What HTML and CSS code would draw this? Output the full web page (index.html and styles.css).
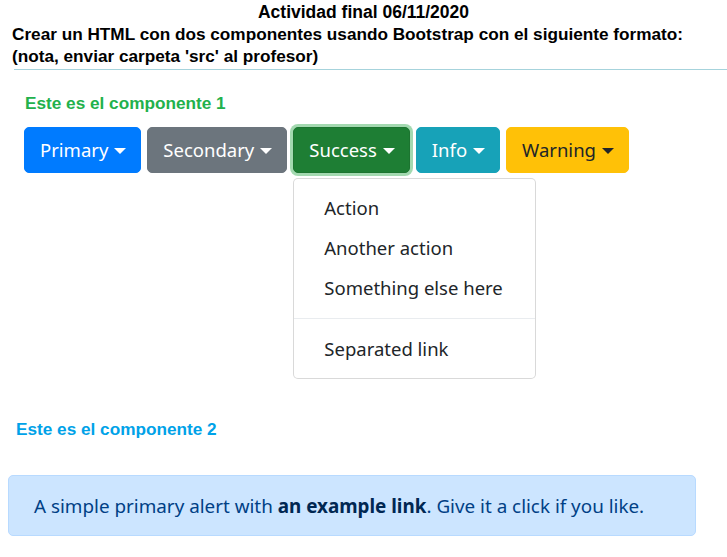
FILE: index.html
```html
<!DOCTYPE html>
<html lang="es">
<head>
<meta charset="utf-8">
<title>Actividad final</title>
<link rel="stylesheet" href="styles.css">
</head>
<body>
<header class="intro">
  <h1 class="title">Actividad final 06/11/2020</h1>
  <p class="task">Crear un HTML con dos componentes usando Bootstrap con el siguiente formato:<br>(nota, enviar carpeta 'src' al profesor)</p>
</header>
<hr class="rule">
<section class="comp comp1">
  <h2 class="label label-green">Este es el componente 1</h2>
  <div class="btn-row">
    <div class="dd"><button class="btn btn-primary">Primary<span class="caret"></span></button></div>
    <div class="dd"><button class="btn btn-secondary">Secondary<span class="caret"></span></button></div>
    <div class="dd open">
      <button class="btn btn-success focus">Success<span class="caret"></span></button>
      <div class="menu">
        <a class="item">Action</a>
        <a class="item">Another action</a>
        <a class="item">Something else here</a>
        <div class="divider"></div>
        <a class="item">Separated link</a>
      </div>
    </div>
    <div class="dd"><button class="btn btn-info">Info<span class="caret"></span></button></div>
    <div class="dd"><button class="btn btn-warning">Warning<span class="caret"></span></button></div>
  </div>
</section>
<section class="comp comp2">
  <h2 class="label label-blue">Este es el componente 2</h2>
  <div class="alert"><p class="alert-text">A simple primary alert with <b>an example link</b>. Give it a click if you like.</p></div>
</section>
</body>
</html>
```
FILE: styles.css
```css
* { box-sizing: border-box; }
body {
  margin: 0;
  background: #fff;
  font-family: "Liberation Sans", Arial, sans-serif;
  color: #000;
}
.intro { padding-top: 1px; }
.title {
  margin: 0;
  text-align: center;
  font-size: 17.5px;
  line-height: 22px;
  font-weight: bold;
}
.task {
  margin: 0;
  padding-left: 12px;
  font-size: 17.2px;
  line-height: 22px;
  font-weight: bold;
}
.rule {
  margin: 2px 0 0 14px;
  border: 0;
  border-top: 1px solid #a6d3dc;
  height: 0;
}
.comp1 { padding: 22px 0 0 24px; }
.label {
  margin: 0;
  font-size: 17.2px;
  line-height: 22px;
  font-weight: bold;
}
.label-green { color: #22b14c; padding-left: 1px; }
.label-blue { color: #00a2e8; }
.btn-row {
  display: flex;
  gap: 6px;
  margin-top: 13px;
}
.dd { position: relative; }
.btn {
  font-family: "Noto Sans", "Open Sans", sans-serif;
  font-size: 18.5px;
  line-height: 28px;
  height: 46px;
  padding: 0 14px 0 15px;
  border: 1px solid transparent;
  border-radius: 5px;
  color: #fff;
  display: flex;
  align-items: center;
  cursor: pointer;
}
.caret {
  display: inline-block;
  width: 0; height: 0;
  margin-left: 6px;
  margin-top: 1px;
  border-top: 6px solid currentColor;
  border-left: 6px solid transparent;
  border-right: 6px solid transparent;
}
.btn-primary { background: #007bff; border-color: #007bff; }
.btn-secondary { background: #6c757d; border-color: #6c757d; }
.btn-success { background: #1e7e34; border-color: #1c7430; }
.btn-success.focus { box-shadow: 0 0 0 3px rgba(72,180,97,.5); }
.btn-info { background: #17a2b8; border-color: #17a2b8; }
.btn-warning { background: #ffc107; border-color: #ffc107; color: #212529; }
.menu {
  position: absolute;
  top: 51px;
  left: 0;
  width: 243px;
  padding: 9px 0;
  background: #fff;
  border: 1px solid rgba(0,0,0,.15);
  border-radius: 5px;
  z-index: 2;
}
.item {
  display: block;
  height: 40px;
  line-height: 40px;
  padding-left: 30px;
  font-family: "Noto Sans", "Open Sans", sans-serif;
  font-size: 18.5px;
  color: #212529;
  white-space: nowrap;
}
.divider {
  height: 0;
  margin: 10px 0;
  border-top: 1px solid #e9ecef;
}
.item:last-child { margin-top: 3px; }
.comp2 { padding: 245px 0 0 0; }
.comp2 .label { padding-left: 16px; }
.alert {
  margin: 35px 31px 0 8px;
  height: 61px;
  padding: 0 24px 0 25px;
  display: flex;
  align-items: center;
  background: #cce5ff;
  border: 1px solid #b8daff;
  border-radius: 5px;
  color: #004085;
  font-family: "Noto Sans", "Open Sans", sans-serif;
  font-size: 18.85px;
}
.alert-text { margin: 0; }
.alert b { font-weight: bold; color: #002752; }
```
